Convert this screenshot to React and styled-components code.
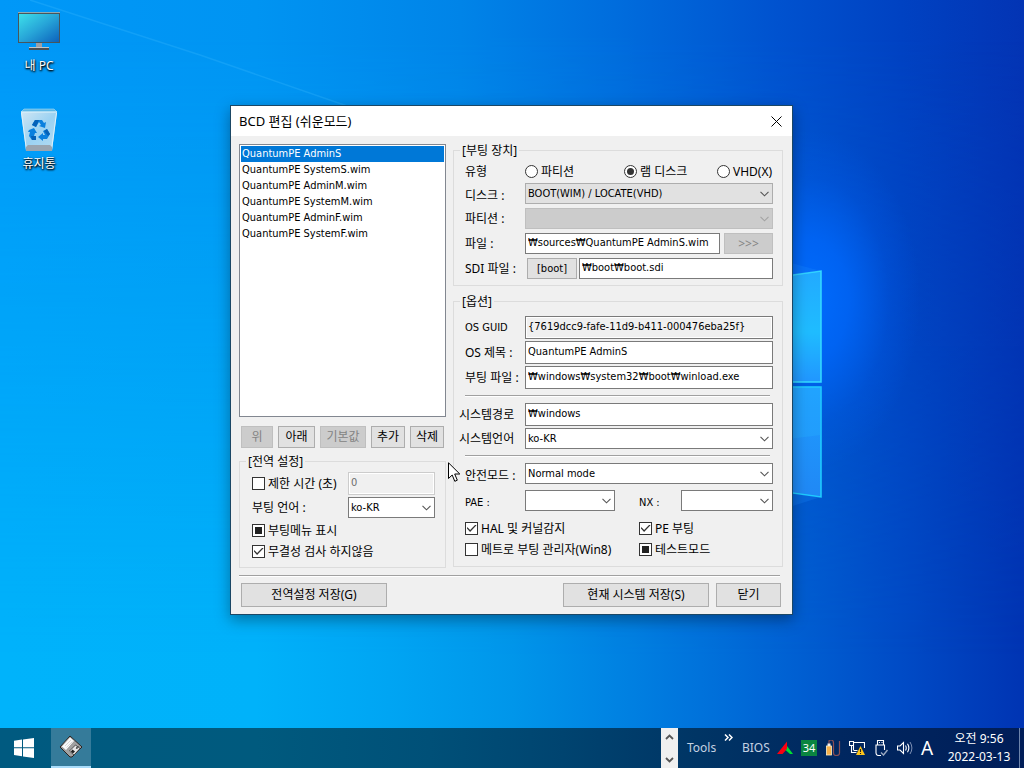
import { useState, useRef, useEffect, useId } from 'react';
import styled, { createGlobalStyle, css } from 'styled-components'

const entries = [
  'QuantumPE AdminS',
  'QuantumPE SystemS.wim',
  'QuantumPE AdminM.wim',
  'QuantumPE SystemM.wim',
  'QuantumPE AdminF.wim',
  'QuantumPE SystemF.wim',
];

const listButtons = [
  { text: '위', width: 32, disabled: true },
  { text: '아래', width: 37 },
  { text: '기본값', width: 46, disabled: true },
  { text: '추가', width: 34 },
  { text: '삭제', width: 34 },
];


function Check({ label, checked = false, mixed = false }) {
  const id = useId();
  const box = useRef(null);

  useEffect(() => {
    box.current.indeterminate = mixed;
  }, [mixed]);

  return (
    <StCheck>
      <StTick id={id} ref={box} type='checkbox' defaultChecked={checked} />
      <label htmlFor={id}>{label}</label>
    </StCheck>
  )
}

function Radio({ label, checked = false }) {
  const id = useId();
  return (
    <StCheck>
      <StRadio id={id} type='radio' name='deviceType' defaultChecked={checked} />
      <label htmlFor={id}>{label}</label>
    </StCheck>
  )
}

function Combo({ id, value = '', width, disabled, gray, label }) {
  return (
    <StCombo $width={width}>
      <StSelect id={id} aria-label={label} disabled={disabled} $gray={gray} defaultValue={value}>
        <option value={value}>{value}</option>
      </StSelect>
      <StArrow viewBox='0 0 9 6' $disabled={disabled}>
        <path d='M0.5 0.8 L4.5 4.8 L8.5 0.8' fill='none' stroke='currentColor' strokeWidth='1.1' />
      </StArrow>
    </StCombo>
  )
}

function PcIcon() {
  return (
    <svg width='48' height='48' viewBox='0 0 48 48'>
      <defs>
        <linearGradient id='screen' x1='0' y1='0' x2='1' y2='1'>
          <stop offset='0' stopColor='#3de0ea' />
          <stop offset='0.5' stopColor='#27a5d8' />
          <stop offset='1' stopColor='#0c62bc' />
        </linearGradient>
      </defs>
      <rect x='3' y='2' width='42' height='31' fill='#47565c' />
      <rect x='3' y='2' width='42' height='1' fill='#8fa9b4' />
      <rect x='4' y='4' width='40' height='28' fill='url(#screen)' />
      <rect x='21' y='33' width='6' height='5' fill='#9aa0a8' />
      <rect x='14' y='37' width='20' height='1' fill='#c3c6c8' />
      <rect x='14' y='38' width='20' height='2' fill='#4b4f52' />
    </svg>
  )
}

function BinIcon() {
  return (
    <svg width='48' height='48' viewBox='0 0 48 48'>
      <defs>
        <linearGradient id='bin' x1='0' y1='0' x2='1' y2='1'>
          <stop offset='0' stopColor='#cfe6f4' />
          <stop offset='0.5' stopColor='#9bd2f2' />
          <stop offset='1' stopColor='#b4dcf3' />
        </linearGradient>
      </defs>
      <path d='M9 1 H39 L42 4 H6 Z' fill='#5cb8e6' stroke='#a9dcf5' strokeWidth='0.6' />
      <path d='M6 4 H42 L37 43 H11 Z' fill='url(#bin)' />
      <path d='M6 4 H42' stroke='#e2f3fc' strokeWidth='1.2' />
      <path d='M6.5 5 L11.5 42' stroke='#dff1fa' strokeWidth='1' />
      <path d='M41.5 5 L36.5 42' stroke='#dff1fa' strokeWidth='1' />
      <path d='M11 39 L13 37 H35 L37 39 V43 H11 Z' fill='#9aa5b0' />
      <g fill='#0a80de'>
        <path d='M20 12 H27 L29 15 L31 14 L30 20 L24 18 L26 17 L24 14 L21 19 L17 17 Z' />
        <path d='M32 21 L35 26 L32 31 H28 V33 L23 29 L28 25 V27 H30 L28 23 Z' />
        <path d='M14 22 L19 20 L22 25 L20 25 L19 28 H21 V32 H17 L14 28 L15 24 L13 24 Z' />
      </g>
      <path d='M20 12 H24 L21 19 L17 17 Z M16 28 H21 V32 H17 Z M32 21 L35 26 L33 28 L29 23 Z' fill='#0561b8' />
    </svg>
  )
}

function Wallpaper() {
  return (
    <StWallpaper viewBox='0 0 1024 728' preserveAspectRatio='none' aria-hidden='true'>
      <defs>
        <linearGradient id='pane' x1='0' y1='0' x2='0' y2='1'>
          <stop offset='0' stopColor='#22aaff' />
          <stop offset='0.55' stopColor='#1fbcff' />
          <stop offset='1' stopColor='#2196ff' />
        </linearGradient>
        <linearGradient id='paneLow' x1='0' y1='0' x2='0' y2='1'>
          <stop offset='0' stopColor='#1f9dff' />
          <stop offset='1' stopColor='#2088f5' />
        </linearGradient>
      </defs>
      <path d='M30 0 L200 55 L350 107' fill='none' stroke='#45c0ff' strokeWidth='1.5' opacity='0.25' />
      <path d='M700 288 L821 271 V382 H700 Z' fill='url(#pane)' stroke='#35dcff' strokeWidth='1.5' />
      <path d='M700 387 H821 V497 L700 480 Z' fill='url(#paneLow)' stroke='#1fd0ff' strokeWidth='1.5' />
      <path d='M700 387 H821 V435 L700 450 Z' fill='#28b4ff' opacity='0.3' />
      <path d='M780 260 L821 271 L780 277 Z M780 492 L821 497 L780 510 Z' fill='#1c8cff' opacity='0.25' />
    </StWallpaper>
  )
}


function BootDevice() {
  return (
    <StGroup>
      <legend>[부팅 장치]</legend>
      <StTypeRow role='radiogroup' aria-label='유형'>
        <StLabel as='span'>유형</StLabel>
        <Radio label='파티션' />
        <Radio label='램 디스크' checked />
        <Radio label='VHD(X)' />
      </StTypeRow>
      <StRow>
        <StLabel htmlFor='disk' $low>디스크 :</StLabel>
        <Combo id='disk' value='BOOT(WIM) / LOCATE(VHD)' gray />
      </StRow>
      <StRow>
        <StLabel htmlFor='partition'>파티션 :</StLabel>
        <Combo id='partition' disabled />
      </StRow>
      <StRow>
        <StLabel htmlFor='file'>파일 :</StLabel>
        <StInput id='file' defaultValue='₩sources₩QuantumPE AdminS.wim' $slim />
        <StButton $width={49} disabled>&gt;&gt;&gt;</StButton>
      </StRow>
      <StRow $tight>
        <StLabel htmlFor='sdi'>SDI 파일 :</StLabel>
        <StButton $width={50} $latin>[boot]</StButton>
        <StInput id='sdi' defaultValue='₩boot₩boot.sdi' $slim />
      </StRow>
    </StGroup>
  )
}

function Options() {
  return (
    <StGroup $dense>
      <legend>[옵션]</legend>
      <StRow>
        <StLabel htmlFor='guid' $latin>OS GUID</StLabel>
        <StInput id='guid' readOnly defaultValue='{7619dcc9-fafe-11d9-b411-000476eba25f}' />
      </StRow>
      <StRow>
        <StLabel htmlFor='title'>OS 제목 :</StLabel>
        <StInput id='title' defaultValue='QuantumPE AdminS' />
      </StRow>
      <StRow>
        <StLabel htmlFor='bootFile'>부팅 파일 :</StLabel>
        <StInput id='bootFile' defaultValue='₩windows₩system32₩boot₩winload.exe' />
      </StRow>
      <StLine $inset />
      <StRow>
        <StLabel htmlFor='sysPath' $wide>시스템경로</StLabel>
        <StInput id='sysPath' defaultValue='₩windows' />
      </StRow>
      <StRow>
        <StLabel htmlFor='sysLang' $wide>시스템언어</StLabel>
        <Combo id='sysLang' value='ko-KR' />
      </StRow>
      <StLine $inset />
      <StRow>
        <StLabel htmlFor='safeMode' $low>안전모드 :</StLabel>
        <Combo id='safeMode' value='Normal mode' />
      </StRow>
      <StPair>
        <StLabel htmlFor='pae' $low $latin>PAE :</StLabel>
        <Combo id='pae' width={90} />
        <StLabel htmlFor='nx' $low $latin $wide>NX :</StLabel>
        <Combo id='nx' />
      </StPair>
      <StChecks>
        <Check label='HAL 및 커널감지' checked />
        <Check label='PE 부팅' checked />
        <Check label='메트로 부팅 관리자(Win8)' />
        <Check label='테스트모드' mixed />
      </StChecks>
    </StGroup>
  )
}

function GlobalSettings() {
  return (
    <StGroup $left $dense>
      <legend>[전역 설정]</legend>
      <StSettingRow>
        <Check label='제한 시간 (초)' />
        <StInput aria-label='제한 시간 (초)' disabled defaultValue='0' />
      </StSettingRow>
      <StSettingRow>
        <label htmlFor='bootLang'>부팅 언어 :</label>
        <Combo id='bootLang' value='ko-KR' />
      </StSettingRow>
      <div>
        <Check label='부팅메뉴 표시' mixed />
        <Check label='무결성 검사 하지않음' checked />
      </div>
    </StGroup>
  )
}

function BcdWindow() {
  const [selected, setSelected] = useState(entries[0]);

  return (
    <StWindow>
      <StTitleBar>
        <StTitle>BCD 편집 (쉬운모드)</StTitle>
        <StClose aria-label='닫기'>
          <svg width='11' height='11' viewBox='0 0 11 11'>
            <path d='M0.5 0.5 L10.5 10.5 M10.5 0.5 L0.5 10.5' stroke='#000' strokeWidth='1' />
          </svg>
        </StClose>
      </StTitleBar>

      <StBody>
        <StColumns>
          <div>
            <StList role='listbox'>
              {entries.map((item) => (
                <StItem
                  key={item}
                  role='option'
                  aria-selected={item === selected}
                  $selected={item === selected}
                  onClick={() => setSelected(item)}
                >{item}</StItem>
              ))}
            </StList>
            <StListButtons>
              {listButtons.map((item) => (
                <StButton key={item.text} $width={item.width} disabled={item.disabled}>{item.text}</StButton>
              ))}
            </StListButtons>
            <GlobalSettings />
          </div>
          <StRight>
            <BootDevice />
            <Options />
          </StRight>
        </StColumns>
        <StLine />
        <StFooter>
          <StButton $width={146}>전역설정 저장(G)</StButton>
          <StSpacer />
          <StButton $width={146}>현재 시스템 저장(S)</StButton>
          <StButton $width={65}>닫기</StButton>
        </StFooter>
      </StBody>

      <StCursor viewBox='0 0 13 21'>
        <path d='M0.5 0.8 V16.5 L4.2 13 L6.8 19.3 L9.3 18.2 L6.7 12 H11.8 Z' fill='#fff' stroke='#000' />
      </StCursor>
    </StWindow>
  )
}

function Taskbar() {
  return (
    <StTaskbar>
      <StStart aria-label='시작'>
        <svg width='20' height='20' viewBox='0 0 20 20' fill='#fff'>
          <path d='M0 2.8 L8 1.6 V9.3 H0 Z M9 1.5 L20 0 V9.3 H9 Z M0 10.3 H8 V18.2 L0 17.1 Z M9 10.3 H20 V20 L9 18.4 Z' />
        </svg>
      </StStart>
      <StTask aria-label='BCD 편집'>
        <svg width='24' height='24' viewBox='0 0 24 24'>
          <path d='M11 1 L23 12 L13 22 L11 22 L1 12 Z' fill='#a2a2a2' stroke='#2b2320' strokeWidth='1' />
          <path d='M11 2 L15.5 6 L7 15.5 L2.5 11.5 Z' fill='#fafafa' stroke='#777' strokeWidth='0.5' />
          <path d='M6 11 L12 5 M7.5 12.5 L13.5 6.5' stroke='#c8c8c8' strokeWidth='0.7' />
          <path d='M16.5 10 L21 13.5 L15 20 L10.5 16 Z' fill='#e6e6e6' stroke='#222' strokeWidth='0.7' />
          <path d='M13.5 14.5 L16 16.5 L14 18.5 L11.8 16.6 Z' fill='#222' />
          <path d='M17 12 L19 13.5 M19.5 11 L17 14' stroke='#333' strokeWidth='0.8' />
        </svg>
      </StTask>
      <StSpacer />
      <StScroll>
        <svg width='9' height='6' viewBox='0 0 9 6'><path d='M1 5 L4.5 1.5 L8 5' fill='none' stroke='#555' strokeWidth='1.8' /></svg>
        <svg width='9' height='6' viewBox='0 0 9 6'><path d='M1 1 L4.5 4.5 L8 1' fill='none' stroke='#555' strokeWidth='1.8' /></svg>
      </StScroll>
      <StTools>Tools</StTools>
      <StMore width='9' height='7' viewBox='0 0 9 7'>
        <path d='M1 0.5 L4 3.5 L1 6.5 M5 0.5 L8 3.5 L5 6.5' fill='none' stroke='#fff' strokeWidth='1.5' />
      </StMore>
      <StBios>BIOS</StBios>
      <StTray>
        <svg viewBox='0 0 16 16'>
          <path d='M10 1.5 V9 L5.5 14 H0 Z' fill='#fa0010' />
          <path d='M10 6 L16 14 H13 L8.5 10 L10 9 Z' fill='#00e030' />
        </svg>
        <StBadge>34</StBadge>
        <svg viewBox='0 0 16 16'>
          <path d='M4 4 V1 Q4 0 6 0 Q8.5 0 8.5 3 V13 Q8.5 15.5 11 15.5 Q14.5 15.5 14.5 13 V1' fill='none' stroke='#8a4f55' strokeWidth='1.2' />
          <rect x='1.5' y='6' width='5' height='9' fill='#f5b04a' stroke='#fff0c8' strokeWidth='0.8' />
          <rect x='2.5' y='3.5' width='3' height='2.5' fill='#eee' />
        </svg>
        <svg viewBox='0 0 16 16'>
          <path d='M0.5 1.5 H4.5 V5.5 H0.5 Z M5 2.5 H15.5 V8 M2.5 6 V12.5 H7.5 M4.5 10.5 H8.500 M4.5 6 V10' fill='none' stroke='#fff' strokeWidth='1.1' />
          <path d='M11.5 6 L16 15 H7 Z' fill='#ffc61a' />
          <path d='M11.5 9 V12 M11.5 13 V14' stroke='#222' strokeWidth='1.1' />
        </svg>
        <svg viewBox='0 0 16 16'>
          <path d='M4.5 5 V0.5 H10.5 V5 M11.5 10 V5 H3 V13 Q3 15.5 5.5 15.5 H8' fill='none' stroke='#fff' strokeWidth='1.1' />
          <path d='M6 2.5 H7 M8.5 2.5 H9.5' stroke='#fff' strokeWidth='1.1' />
          <path d='M8 12.5 L10.5 15 L14.5 10' fill='none' stroke='#9aa9c0' strokeWidth='1.4' />
        </svg>
        <svg viewBox='0 0 16 16'>
          <path d='M0.5 6 H3 L6.5 2.5 V13.5 L3 10 H0.5 Z M8.5 5.5 Q10 8 8.5 10.5 M10.5 3.8 Q13.2 8 10.5 12.2' fill='none' stroke='#fff' strokeWidth='1.1' />
          <path d='M13 2 Q16.8 8 13 14' fill='none' stroke='#7d8fb3' strokeWidth='1' />
        </svg>
        <StIme>A</StIme>
      </StTray>
      <StClock>
        <div>오전 9:56</div>
        <div>2022-03-13</div>
      </StClock>
      <StShowDesktop aria-label='바탕 화면 보기' />
    </StTaskbar>
  )
}

function App() {
  return (
    <>
      <GlobalStyle />
      <StScreen>
        <StDesktop>
          <Wallpaper />
          <StIcons>
            <StIcon><PcIcon />내 PC</StIcon>
            <StIcon><BinIcon />휴지통</StIcon>
          </StIcons>
          <BcdWindow />
        </StDesktop>
        <Taskbar />
      </StScreen>
    </>
  )
}

const GlobalStyle = createGlobalStyle`
  * {
    box-sizing: border-box;
  }
  body {
    margin: 0;
    font-family: 'Noto Sans', 'Noto Sans CJK KR', sans-serif;
    font-size: 12px;
    line-height: 16px;
    color: #000;
  }
  button, input, select {
    font: inherit;
    color: inherit;
    margin: 0;
    border-radius: 0;
  }
`

const latin = css`
  font-family: 'DejaVu Sans Condensed', 'Noto Sans CJK KR', sans-serif;
  font-size: 11px;
`

const StScreen = styled.div`
  display: flex;
  flex-direction: column;
  min-height: 100vh;
`

const StDesktop = styled.main`
  position: relative;
  flex: 1;
  min-height: 640px;
  overflow: hidden;
  background: linear-gradient(90deg, #00b3fb 0%, #00b2fa 25%, #00a5f3 38%, #0096ea 50%, #007de0 63%, #0063d4 76%, #004bc6 88%, #0034b3 100%);

  &::before {
    content: '';
    position: absolute;
    inset: 0;
    background: linear-gradient(90deg, #0098f8 0%, #0094f2 25%, #0084e8 45%, #006ddd 60%, #0052cf 76%, #0042c2 88%, #0334b4 100%);
    mask-image: linear-gradient(180deg, #000 5%, transparent 90%);
  }
  &::after {
    content: '';
    position: absolute;
    inset: 0;
    background: radial-gradient(ellipse 110px 170px at 810px 300px, rgba(0, 108, 255, 0.95), rgba(0, 105, 255, 0.75) 35%, rgba(0, 100, 255, 0.2) 72%, rgba(0, 90, 240, 0) 100%);
  }
`

const StWallpaper = styled.svg`
  position: absolute;
  inset: 0;
  z-index: 1;
  width: 100%;
  height: 100%;
`

const StIcons = styled.div`
  position: relative;
  z-index: 2;
  display: flex;
  flex-direction: column;
  gap: 34px;
  width: 78px;
  padding-top: 10px;
`

const StIcon = styled.div`
  display: flex;
  flex-direction: column;
  align-items: center;
  color: #fff;
  text-shadow: 1px 1px 2px #000, 0 1px 2px #000;
`

const StWindow = styled.section`
  position: absolute;
  z-index: 3;
  top: 105px;
  left: calc(50% - 282px);
  width: 563px;
  border: 1px solid #1b4765;
  background-color: #f0f0f0;
  box-shadow: 0 5px 14px rgba(0, 0, 0, 0.35);
`

const StTitleBar = styled.header`
  display: flex;
  justify-content: space-between;
  align-items: center;
  height: 30px;
  padding-left: 8px;
  background-color: #fff;
`

const StTitle = styled.h1`
  margin: 0;
  font-size: 13px;
  font-weight: normal;
`

const StClose = styled.button`
  display: flex;
  justify-content: center;
  align-items: center;
  width: 31px;
  height: 28px;
  padding: 0;
  border: 0;
  background: none;
`

const StBody = styled.div`
  padding: 8px 9px 7px 8px;
`

const StColumns = styled.div`
  display: grid;
  grid-template-columns: 207px 1fr;
  gap: 7px;
  align-items: start;
  margin-bottom: 7px;
`

const StRight = styled.div`
  display: flex;
  flex-direction: column;
  gap: 9px;
`

const StList = styled.ul`
  height: 273px;
  margin: 0;
  padding: 1px;
  border: 1px solid #828790;
  background-color: #fff;
  list-style: none;
  ${latin}
`

const StItem = styled.li`
  height: 16px;
  padding-left: 1px;
  color: ${(props) => (props.$selected ? '#fff' : '#000')};
  background-color: ${(props) => (props.$selected ? '#0078d7' : 'transparent')};
`

const StListButtons = styled.div`
  display: flex;
  gap: 5px;
  height: 22px;
  margin: 9px 0 7px;
  padding-left: 2px;
`

const StButton = styled.button`
  flex: none;
  width: ${(props) => props.$width}px;
  padding: 0;
  border: 1px solid #adadad;
  background-color: #e1e1e1;
  line-height: 16px;
  white-space: nowrap;
  ${(props) => props.$latin && latin}

  &:disabled {
    border-color: #bfbfbf;
    background-color: #ccc;
    color: #838383;
  }
`

const StGroup = styled.fieldset`
  display: flex;
  flex-direction: column;
  gap: ${(props) => (props.$dense ? 2 : 4)}px;
  min-width: 0;
  margin: 0;
  padding: ${(props) => (props.$dense && !props.$left ? '8px 9px 6px 5px' : '4px 9px 6px 5px')};
  border: 1px solid #dcdcdc;

  ${(props) => props.$left && css`
    padding: 4px 10px 5px 12px;
  `}

  legend {
    margin-left: ${(props) => (props.$left ? -6 : 1)}px;
    padding: 0 2px;
    line-height: 13px;
  }
`

const StRow = styled.div`
  display: flex;
  align-items: stretch;
  gap: ${(props) => (props.$tight ? 2 : 4)}px;

  > label:first-child {
    margin-right: ${(props) => (props.$tight ? 0 : -4)}px;
  }
`

const StTypeRow = styled.div`
  display: grid;
  grid-template-columns: 66px 99px 93px 1fr;
  align-items: center;
  height: 18px;
`

const StPair = styled.div`
  display: grid;
  grid-template-columns: 66px 114px 42px 1fr;
  margin-top: 4px;
`

const StSettingRow = styled.div`
  display: grid;
  grid-template-columns: 96px 1fr;
  align-items: center;
`

const StLabel = styled.label`
  flex: none;
  align-self: center;
  width: 66px;
  padding-left: ${(props) => (props.$wide ? 0 : 6)}px;
  padding-top: ${(props) => (props.$low ? 5 : 0)}px;
  white-space: nowrap;
  ${(props) => props.$latin && latin}
`

const StInput = styled.input`
  flex: 1;
  width: 100%;
  min-width: 0;
  height: ${(props) => (props.$slim ? 21 : 23)}px;
  padding: 0 2px 2px;
  border: 1px solid #7a7a7a;
  background-color: #fff;
  ${latin}

  &:read-only {
    background-color: #f0f0f0;
    box-shadow: inset 0 0 0 1px #fff;
  }
  &:disabled {
    border-color: #ccc;
    color: #6d6d6d;
    box-shadow: inset 0 0 0 1px #fff;
  }
`

const StCombo = styled.div`
  position: relative;
  flex: 1;
  width: ${(props) => (props.$width ? props.$width + 'px' : 'auto')};
`

const StSelect = styled.select`
  display: block;
  appearance: none;
  width: 100%;
  height: 21px;
  padding: 0 20px 0 2px;
  border: 1px solid ${(props) => (props.$gray ? '#adadad' : '#7a7a7a')};
  background-color: ${(props) => (props.$gray ? '#e1e1e1' : '#fff')};
  ${latin}

  &:disabled {
    border-color: #bfbfbf;
    background-color: #ccc;
    opacity: 1;
  }
`

const StArrow = styled.svg`
  position: absolute;
  top: 8px;
  right: 4px;
  width: 9px;
  height: 6px;
  color: ${(props) => (props.$disabled ? '#a3a3a3' : '#555')};
  pointer-events: none;
`

const StCheck = styled.div`
  display: flex;
  align-items: center;
  gap: 3px;
  height: 21px;
  white-space: nowrap;
`

const StTick = styled.input`
  appearance: none;
  flex: none;
  display: grid;
  place-items: center;
  width: 13px;
  height: 13px;
  border: 1px solid #333;
  background-color: #fff;

  &:checked::before {
    content: '';
    width: 10px;
    height: 8px;
    background-color: #333;
    clip-path: polygon(0 45%, 10% 35%, 36% 68%, 90% 0, 100% 10%, 36% 94%);
  }
  &:indeterminate::before {
    content: '';
    width: 7px;
    height: 7px;
    background-color: #222;
  }
`

const StRadio = styled(StTick)`
  border-radius: 50%;

  &:checked::before {
    width: 7px;
    height: 7px;
    border-radius: 50%;
    clip-path: none;
  }
  &:indeterminate::before {
    content: none;
  }
`

const StChecks = styled.div`
  display: grid;
  grid-template-columns: 174px 1fr;
  margin-top: 5px;
  padding-left: 6px;
`

const StLine = styled.hr`
  height: 2px;
  margin: ${(props) => (props.$inset ? '4px 3px 4px 6px' : '0 3px 6px 0')};
  border: 0;
  border-top: 1px solid #a0a0a0;
  background-color: #fff;
`

const StFooter = styled.footer`
  display: flex;
  gap: 7px;
  height: 24px;
  padding: 0 2px;
`

const StSpacer = styled.div`
  flex: 1;
`

const StCursor = styled.svg`
  position: absolute;
  top: 356px;
  left: 217px;
  width: 13px;
  height: 21px;
  pointer-events: none;
`

const StTaskbar = styled.footer`
  display: flex;
  align-items: center;
  height: 40px;
  background: linear-gradient(90deg, #005a80 0%, #005a7e 25%, #005078 42%, #004470 55%, #003565 68%, #002760 82%, #001d58 100%);
  color: #e4ebf5;
`

const StStart = styled.button`
  display: flex;
  align-items: center;
  width: 51px;
  height: 40px;
  padding: 0 0 0 14px;
  border: 0;
  background: none;
`

const StTask = styled.button`
  display: flex;
  justify-content: center;
  align-items: center;
  width: 40px;
  height: 40px;
  padding: 0;
  border: 0;
  border-bottom: 2px solid #a9dcfa;
  background-color: #357b9a;
`

const StScroll = styled.div`
  display: flex;
  flex-direction: column;
  justify-content: space-between;
  align-items: center;
  width: 17px;
  height: 40px;
  padding: 6px 0 5px;
  background-color: #f0f0f0;
`

const StTools = styled.div`
  width: 46px;
  padding-left: 9px;
  color: #c5d2e2;
`

const StMore = styled.svg`
  align-self: flex-start;
  margin-top: 6px;
`

const StBios = styled.div`
  width: 44px;
  padding-left: 9px;
  color: #c5d2e2;
`

const StTray = styled.div`
  display: flex;
  align-items: center;
  gap: 8px;

  svg {
    width: 16px;
    height: 16px;
  }
`

const StBadge = styled.div`
  width: 16px;
  height: 16px;
  background-color: #0a8540;
  color: #fff;
  font-size: 11px;
  text-align: center;
`

const StIme = styled.div`
  width: 18px;
  color: #fff;
  font-size: 19px;
`

const StClock = styled.div`
  width: 80px;
  color: #fff;
  line-height: 18px;
  text-align: center;
`

const StShowDesktop = styled.button`
  width: 5px;
  height: 40px;
  padding: 0;
  border: 0;
  border-left: 1px solid #6d84ab;
  background: none;
`

export default App
